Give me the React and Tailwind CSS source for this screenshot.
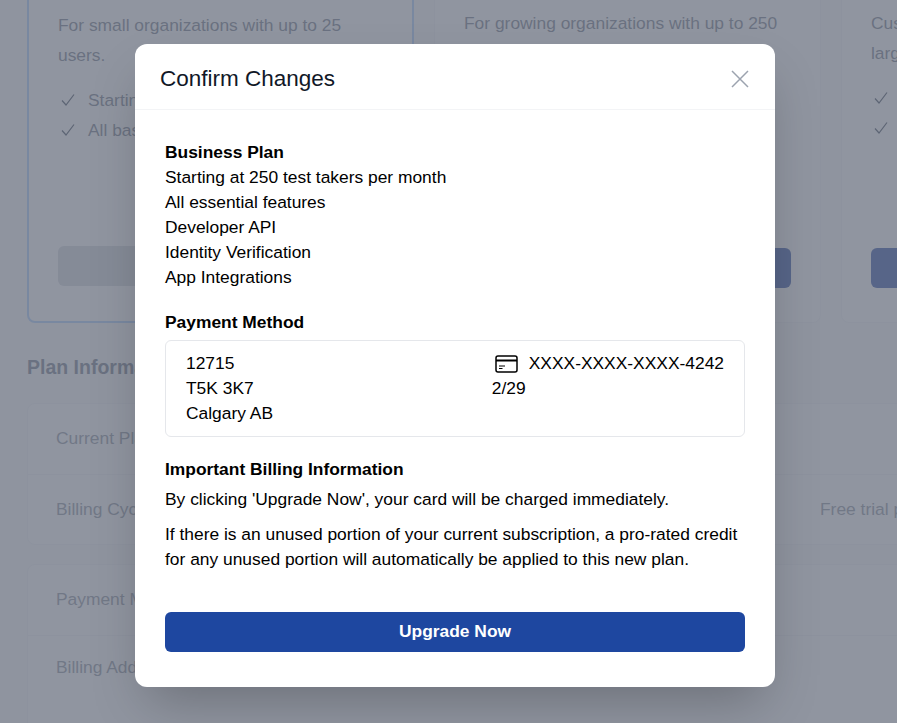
const PLANS = [
  {
    desc: 'For small organizations with up to 25 users.',
    features: ['Starting at 25 test takers per month', 'All basic features'],
    active: true,
  },
  {
    desc: 'For growing organizations with up to 250 users.',
    features: ['Starting at 250 test takers per month', 'All essential features'],
  },
  {
    desc: 'Custom solutions and tailored pricing for large organizations.',
    features: ['Unlimited test takers', 'All features'],
  },
];

const CheckIcon = () => (
  <svg width="16" height="16" viewBox="0 0 16 16" fill="none" stroke="currentColor" strokeWidth="1.2" className="shrink-0">
    <path d="M2 8.5 L6 13 L14 2.5" />
  </svg>
);

const CardIcon = () => (
  <svg width="23" height="18" viewBox="0 0 23 18" fill="none" stroke="#000" strokeWidth="1.5" className="shrink-0">
    <rect x="1" y="1" width="21" height="16" rx="2" />
    <path d="M1 5.5 H22" strokeWidth="2" />
    <path d="M4 11 H10 M4 13.5 H7.5" strokeWidth="1.2" />
  </svg>
);

const PlanCard = ({ plan }) => (
  <div className={`w-[387px] shrink-0 h-[400px] rounded-lg bg-white pl-[29px] pr-[30px] flex flex-col ${plan.active ? 'pt-[85px] border-2 border-[#a4cafe]' : 'pt-[84px] border border-gray-100'}`}>
    <p className="text-[17.4px] leading-[30px] text-gray-500">{plan.desc}</p>
    <ul className="mt-[15px]">
      {plan.features.map((f) => (
        <li key={f} className="flex items-center gap-3 h-[30px] text-[17.4px] text-gray-500 whitespace-nowrap">
          <span className="ml-[2px] text-gray-700"><CheckIcon /></span>
          {f}
        </li>
      ))}
    </ul>
    <div className={`h-10 w-[327px] rounded-md ${plan.active ? 'mt-[101px] bg-gray-300' : 'mt-[105px] bg-[#1e429f]'}`} />
  </div>
);

const InfoRow = ({ label, value, className = '' }) => (
  <div className={`flex items-center pl-[28px] text-[17.4px] text-[#848b99] whitespace-nowrap ${className}`}>
    <span className="w-[764px] shrink-0">{label}</span>
    {value && <span>{value}</span>}
  </div>
);

export default function App() {
  return (
    <div className="relative h-[723px] overflow-hidden bg-[#f9fafb] font-['Liberation_Sans',Arial,sans-serif]">
      {/* Page behind the modal */}
      <div className="pl-[27px] -mt-[77px] w-[1400px]">
        <div className="flex gap-5">
          {PLANS.map((plan) => (
            <PlanCard key={plan.desc} plan={plan} />
          ))}
        </div>

        <h2 className="mt-[33px] text-[19.5px] leading-[22px] font-bold text-gray-500">Plan Information</h2>

        <div className="mt-[25px] w-[1000px] rounded-lg border border-gray-100 bg-white">
          <InfoRow label="Current Plan" className="h-[70px] pb-[2px]" />
          <InfoRow label="Billing Cycle" value="Free trial period" className="h-[70px] border-t border-gray-100" />
        </div>

        <div className="mt-[19px] w-[1000px] rounded-lg border border-gray-100 bg-white">
          <InfoRow label="Payment Method" className="h-[70px] pb-[2px]" />
          <InfoRow label="Billing Address" className="h-[66px] pb-[2px] border-t border-gray-100" />
          <div className="h-[60px]" />
        </div>
      </div>

      {/* Overlay */}
      <div className="absolute inset-0 bg-[#6b7280]/75" />

      {/* Modal */}
      <div className="absolute left-[135px] top-[44px] w-[640px] h-[643px] rounded-xl bg-white shadow-2xl">
        <div className="h-[66px] pt-[5px] flex items-center justify-between pl-[25px] pr-[26px] border-b border-gray-100">
          <h3 className="text-[22.5px] leading-7 text-[#111827]">Confirm Changes</h3>
          <svg width="18" height="18" viewBox="0 0 18 18" fill="none" stroke="#9ca3af" strokeWidth="1.5">
            <path d="M1 1 L17 17 M17 1 L1 17" />
          </svg>
        </div>

        <div className="px-[30px] pt-[30px] text-[17.4px] leading-[25px] text-black">
          <p className="font-bold">Business Plan</p>
          <p>Starting at 250 test takers per month</p>
          <p>All essential features</p>
          <p>Developer API</p>
          <p>Identity Verification</p>
          <p>App Integrations</p>

          <p className="mt-5 font-bold">Payment Method</p>
          <div className="mt-[5px] flex justify-between rounded-md border border-gray-200 px-5 py-2.5">
            <div>
              <p>12715</p>
              <p>T5K 3K7</p>
              <p>Calgary AB</p>
            </div>
            <div>
              <p className="flex items-center gap-[11px] pl-[3px]"><CardIcon />XXXX-XXXX-XXXX-4242</p>
              <p>2/29</p>
            </div>
          </div>

          <p className="mt-5 font-bold">Important Billing Information</p>
          <p className="mt-[5px]">By clicking 'Upgrade Now', your card will be charged immediately.</p>
          <p className="mt-2.5">If there is an unused portion of your current subscription, a pro-rated credit for any unused portion will automatically be applied to this new plan.</p>

          <button className="mt-10 h-10 w-full pb-[2px] rounded-md bg-[#1e47a0] text-[17.4px] font-bold text-white">Upgrade Now</button>
        </div>
      </div>
    </div>
  );
}
